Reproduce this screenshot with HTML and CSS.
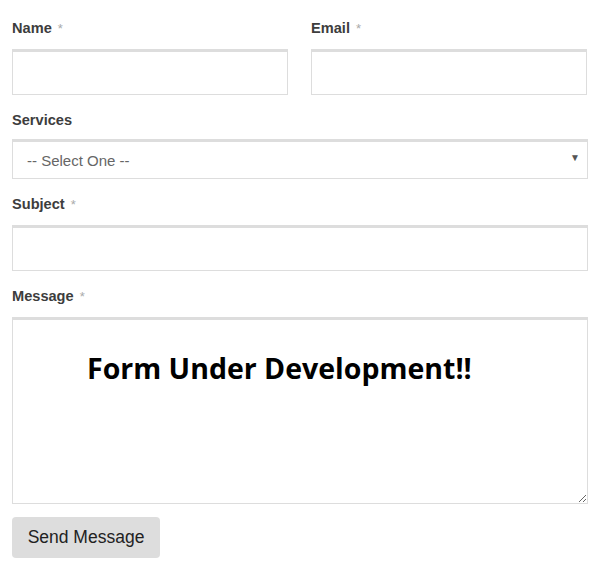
FILE: index.html
```html
<!DOCTYPE html>
<html lang="en">
<head>
    <meta charset="UTF-8">
    <meta name="viewport" content="width=device-width, initial-scale=1.0">
    <title>Contact</title>
    <link rel="stylesheet" href="styles.css">
</head>
<body>
    <form class="contact-form">
        <div class="row">
            <div class="field">
                <label>Name <span class="req">*</span></label>
                <input type="text" class="text-input">
            </div>
            <div class="field">
                <label>Email <span class="req">*</span></label>
                <input type="email" class="text-input">
            </div>
        </div>

        <div class="field">
            <label>Services</label>
            <div class="select-wrap">
                <select class="select-input">
                    <option>-- Select One --</option>
                </select>
            </div>
        </div>

        <div class="field">
            <label>Subject <span class="req">*</span></label>
            <input type="text" class="text-input">
        </div>

        <div class="field">
            <label>Message <span class="req">*</span></label>
            <div class="message-wrap">
                <textarea class="message-input"></textarea>
                <div class="notice">Form Under Development!!</div>
            </div>
        </div>

        <button type="button" class="send-btn">Send Message</button>
    </form>
</body>
</html>
```
FILE: styles.css
```css
body {
    margin: 0;
    padding: 0;
    background: #fff;
    font-family: "Liberation Sans", Arial, sans-serif;
    color: #444;
}
.contact-form {
    width: 576px;
    margin: 0 0 0 12px;
    padding-top: 18px;
}
.row {
    display: grid;
    grid-template-columns: 276px 276px;
    column-gap: 23px;
}
.field {
    margin-bottom: 15px;
}
label {
    display: block;
    font-size: 14.6px;
    font-weight: bold;
    line-height: 20px;
    margin-bottom: 10px;
    color: #3d3d3d;
}
.req {
    color: #aaa;
    font-weight: normal;
    font-size: 13px;
    margin-left: 2px;
}
.text-input {
    display: block;
    box-sizing: border-box;
    width: 100%;
    height: 46px;
    border: 1px solid #ddd;
    border-top: 3px solid #ddd;
    margin: 0;
    padding: 0 14px;
    font-size: 15px;
    background: #fff;
}
.select-wrap {
    position: relative;
    margin-top: -1px;
}
.select-wrap::after {
    content: "\25BC";
    position: absolute;
    right: 8px;
    top: 13px;
    font-size: 10px;
    color: #555;
    pointer-events: none;
}
.select-input {
    display: block;
    box-sizing: border-box;
    width: 100%;
    height: 40px;
    border: 1px solid #ddd;
    border-top: 3px solid #ddd;
    padding: 0 14px;
    font-family: "Liberation Sans", Arial, sans-serif;
    font-size: 15px;
    color: #666;
    background: #fff;
    appearance: none;
    -webkit-appearance: none;
    border-radius: 0;
}
.message-wrap {
    position: relative;
}
.message-input {
    display: block;
    box-sizing: border-box;
    width: 100%;
    height: 187px;
    border: 1px solid #ddd;
    border-top: 3px solid #ddd;
    margin: 0;
    padding: 10px 14px;
}
.notice {
    position: absolute;
    left: 75px;
    top: 32px;
    font-family: "Open Sans", sans-serif;
    font-size: 28.5px;
    font-weight: bold;
    color: #000;
    pointer-events: none;
}
.send-btn {
    display: block;
    margin-top: -2px;
    width: 148px;
    height: 41px;
    background: #ddd;
    border: none;
    border-radius: 4px;
    font-family: "Liberation Sans", Arial, sans-serif;
    font-size: 17.5px;
    color: #222;
    cursor: pointer;
}
```
